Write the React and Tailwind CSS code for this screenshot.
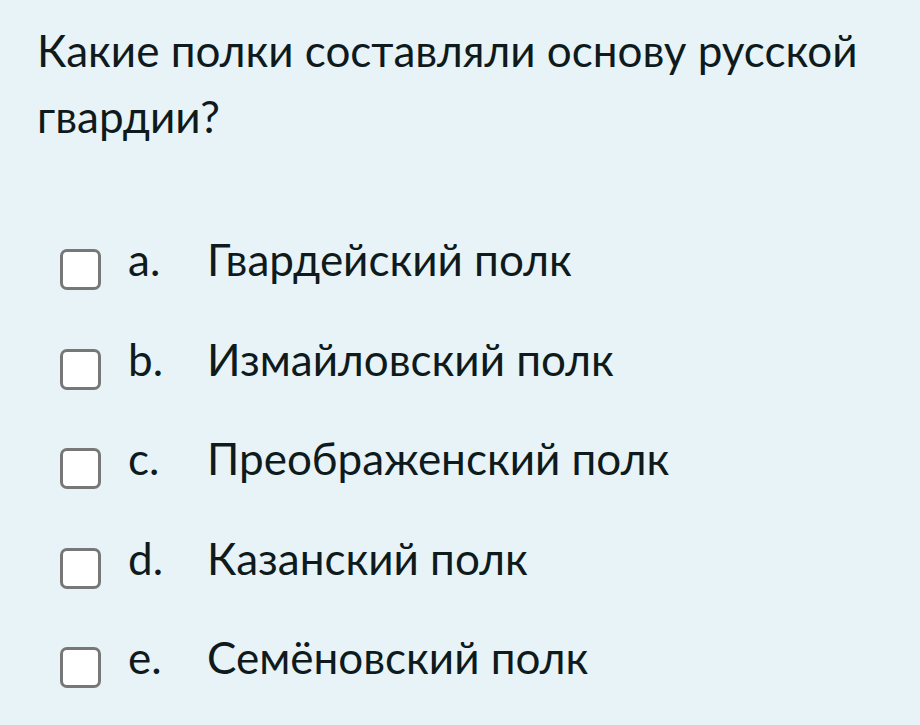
const OPTIONS = [
  { key: "a", label: "Гвардейский полк" },
  { key: "b", label: "Измайловский полк" },
  { key: "c", label: "Преображенский полк" },
  { key: "d", label: "Казанский полк" },
  { key: "e", label: "Семёновский полк" },
];

export default function App() {
  return (
    <div
      className="w-[920px] h-[725px] overflow-hidden bg-[#e7f3f6] text-[#0f1a1c]"
      style={{ fontFamily: "Lato, 'Noto Sans', sans-serif" }}
    >
      {/* Question */}
      <div className="pl-[37px] pr-4 pt-[17px] text-[44px] leading-[66px]">
        Какие полки составляли основу русской гвардии?
      </div>

      {/* Answers */}
      <div className="pl-[60px] pt-[88px] flex flex-col">
        {OPTIONS.map((opt) => (
          <label key={opt.key} className="flex items-start h-[99.5px] text-[44px] leading-[44px]">
            <span className="mt-[12px] w-[41px] h-[41px] shrink-0 rounded-[7px] border-[3px] border-[#777] bg-white" />
            <span className="w-[106px] shrink-0 pl-[27px]">{opt.key}.</span>
            <span>{opt.label}</span>
          </label>
        ))}
      </div>
    </div>
  );
}
